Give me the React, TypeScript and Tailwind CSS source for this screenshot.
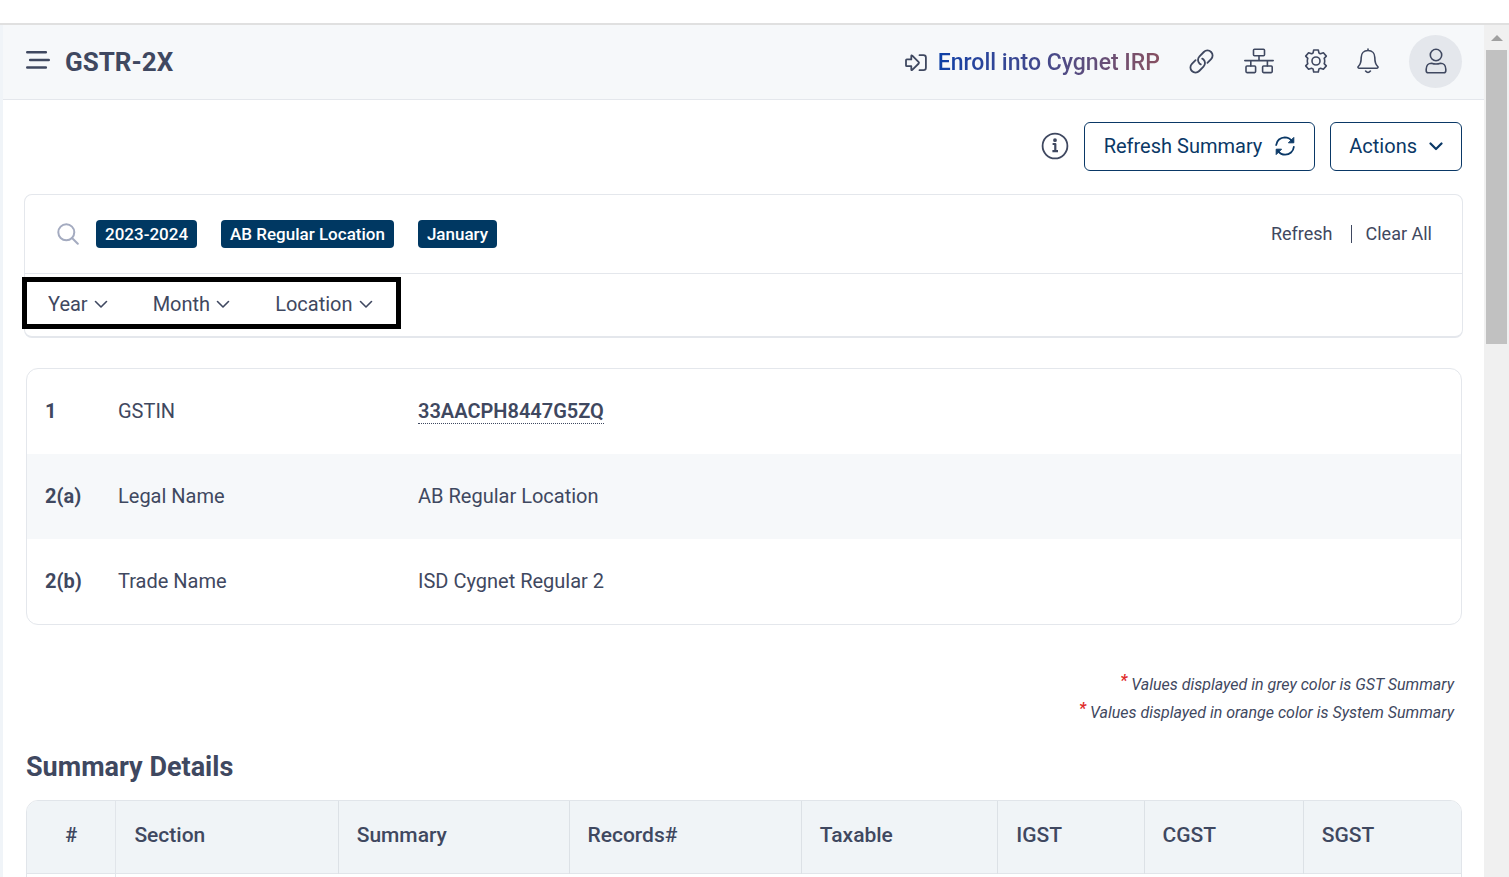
import type { ReactNode } from "react";

const chips = ["2023-2024", "AB Regular Location", "January"];

const filters = [
  { id: "year", label: "Year" },
  { id: "month", label: "Month" },
  { id: "location", label: "Location" },
];

const details = [
  { no: "1", label: "GSTIN", value: "33AACPH8447G5ZQ", link: true },
  { no: "2(a)", label: "Legal Name", value: "AB Regular Location" },
  { no: "2(b)", label: "Trade Name", value: "ISD Cygnet Regular 2" },
];

const columns = [
  { title: "Section", width: "w-[15.5%]" },
  { title: "Summary", width: "w-[16.1%]" },
  { title: "Records#", width: "w-[16.2%]" },
  { title: "Taxable", width: "w-[13.7%]" },
  { title: "IGST", width: "w-[10.2%]" },
  { title: "CGST", width: "w-[11.1%]" },
  { title: "SGST", width: "" },
];

const notes = [
  "Values displayed in grey color is GST Summary",
  "Values displayed in orange color is System Summary",
];

type IconProps = {
  className?: string;
  box: string;
  stroke?: number;
  children: ReactNode;
};

function Icon({ className, box, stroke = 1.6, children }: IconProps) {
  return (
    <svg
      className={className}
      viewBox={box}
      fill="none"
      stroke="currentColor"
      strokeWidth={stroke}
      strokeLinecap="round"
      strokeLinejoin="round"
      aria-hidden="true"
    >
      {children}
    </svg>
  );
}

function Chevron({ stroke = 1.6 }: { stroke?: number }) {
  return (
    <Icon box="0 0 14 14" stroke={stroke} className="w-[14px] h-[14px] shrink-0">
      <path d="M1.5 4.5 7 10l5.500-5.500" />
    </Icon>
  );
}

function Header() {
  return (
    <header className="flex items-center h-[75px] pl-[23px] pr-[22px] bg-[#f6f8fa] border-b border-[#e4e7ec]">
      <button type="button" aria-label="Toggle menu" className="mr-[15px] pb-1">
        <Icon box="0 0 24 20" stroke={2.6} className="w-6 h-5">
          <path d="M1.300 2.200h18.500M4.200 10h18.500M1.300 17.500h18.500" />
        </Icon>
      </button>
      <h1 className="text-[26px] leading-8 font-bold">GSTR-2X</h1>

      <div className="flex items-center ml-auto pb-0.5">
        <a href="#" className="flex items-center gap-[11px] mr-[29px] pt-1">
          <Icon box="0 0 22 18" stroke={1.8} className="w-[22px] h-[18px]">
            <path d="M1 6.200v5.200q0 .8.800.8h4.500v3.200q0 1.300 1 .5l6.400-6.400q.6-.7 0-1.400L7.300 1.700q-1-.8-1 .5v3.200H1.800Q1 5.400 1 6.200Z" />
            <path d="M14.500 1.200h4q2.400 0 2.400 2.400v10.200q0 2.400-2.400 2.400h-4" />
          </Icon>
          <span className="text-[23px] leading-8 font-medium bg-linear-to-r from-[#0a3fa6] via-[#46498a] to-[#875060] bg-clip-text text-transparent">
            Enroll into Cygnet IRP
          </span>
        </a>
        <button type="button" aria-label="Links" className="mr-[30px]">
          <Icon box="0 0 25 25" stroke={1.8} className="w-[25px] h-[25px]">
            <path d="M6.600 11.100 2.900 14.800a5.100 5.100 0 0 0 0 7.200 5.100 5.100 0 0 0 7.300 0l4.300-4.300a5.100 5.100 0 0 0 0-7.200 5 5 0 0 0-1.300-.9" />
            <path d="m18.400 13.900 3.700-3.700a5.100 5.100 0 0 0 0-7.200 5.100 5.100 0 0 0-7.300 0l-4.300 4.300a5.100 5.100 0 0 0 0 7.200 5 5 0 0 0 1.300.9" />
          </Icon>
        </button>
        <button type="button" aria-label="Organisation" className="mr-[30px]">
          <Icon box="0 0 30 26" className="w-[30px] h-[26px]">
            <rect x="9.500" y="1.200" width="11" height="6.600" rx="1" />
            <rect x="2" y="18" width="9.600" height="6.600" rx="1" />
            <rect x="18.600" y="18" width="9.600" height="6.600" rx="1" />
            <path d="M15 8v4.600M.8 12.600h28.400M6.800 12.600V18M23.400 12.600V18" />
          </Icon>
        </button>
        <button type="button" aria-label="Settings" className="mr-[29px]">
          <Icon box="0 0 24 24" className="w-6 h-6">
            <path d="M9.700 1h4.600l.6 2.900q.9.400 1.600.9l2.900-1 2.900 3.300-2.100 2.300q.5 1.200.5 2.600t-.5 2.600l2.100 2.300-2.900 3.300-2.900-1q-.7.500-1.600.9l-.6 2.900H9.700l-.6-2.900q-.9-.4-1.600-.9l-2.900 1-2.900-3.300 2.100-2.300q-.5-1.200-.5-2.600t.5-2.600L1.700 7.100l2.900-3.300 2.900 1q.7-.5 1.600-.9Z" />
            <circle cx="12" cy="12" r="4" />
          </Icon>
        </button>
        <button type="button" aria-label="Notifications" className="mr-[30px]">
          <Icon box="0 0 22 26" className="w-[22px] h-[26px]">
            <path d="M11 1v1.500M11 2.500c-4.200 0-6.800 3-6.800 7 0 5.500-1.200 7.500-2.900 9-.6.700-.3 1.700.6 1.700h18.200c.9 0 1.200-1 .6-1.700-1.700-1.500-2.900-3.500-2.900-9 0-4-2.600-7-6.800-7ZM8.600 23q2.400 2.900 4.800 0" />
          </Icon>
        </button>
        <button
          type="button"
          aria-label="Profile"
          className="flex items-center justify-center w-[53px] h-[53px] rounded-full bg-[#e4e7ec]"
        >
          <Icon box="0 0 22 26" className="w-[22px] h-[26px]">
            <circle cx="11" cy="7" r="5.700" />
            <path d="M6.500 15.200q4.500 1.600 9 0c3 0 5.300 2.400 5.300 6v1.600q0 2-2 2H3.200q-2 0-2-2v-1.600c0-3.600 2.300-6 5.300-6Z" />
          </Icon>
        </button>
      </div>
    </header>
  );
}

function Toolbar() {
  return (
    <div className="flex items-center justify-end gap-[15px] mt-[22px] text-[#0a3866]">
      <button type="button" aria-label="Information" className="pb-0.5 text-[#3f4860]">
        <Icon box="0 0 28 28" stroke={1.8} className="w-7 h-7">
          <circle cx="14" cy="14" r="12.400" />
          <path d="M11.600 12h2.700v7.200M11.400 19.200h5.600" strokeWidth="2.200" strokeLinecap="butt" />
          <circle cx="14" cy="8.200" r="1" fill="currentColor" />
        </Icon>
      </button>
      <button
        type="button"
        className="flex items-center gap-[13px] h-[49px] px-[19px] pb-0.5 border border-[#0a3866] rounded-md"
      >
        Refresh Summary
        <Icon box="0 0 20 20" stroke={1.8} className="w-5 h-5">
          <path d="M1.200 9C1.600 4.500 5.400 1.500 9.800 1.300c3 0 5.400 1.400 7 3.600M18.800 11c-.4 4.500-4.200 7.500-8.600 7.700-3 0-5.400-1.400-7-3.600" />
          <path d="M18.800 1.800v5h-5ZM1.200 18.200v-5h5Z" fill="currentColor" strokeWidth="1" />
        </Icon>
      </button>
      <button
        type="button"
        aria-haspopup="menu"
        className="flex items-center gap-3 h-[49px] px-[18px] pb-0.5 border border-[#0a3866] rounded-md"
      >
        Actions
        <Chevron stroke={2.2} />
      </button>
    </div>
  );
}

function SearchPanel() {
  return (
    <section className="-ml-0.5 -mr-px mt-[23px] border border-b-2 border-[#e4e7ec] rounded-lg">
      <div className="flex items-center h-[79px] pl-8 pr-[30px] border-b border-[#e4e7ec]">
        <Icon box="0 0 22 22" stroke={2} className="w-[22px] h-[22px] mr-[17px] text-[#a4abc0]">
          <circle cx="9.300" cy="9.300" r="8" />
          <path d="m15 15 5.800 5.800" />
        </Icon>
        <ul className="flex gap-6">
          {chips.map((chip) => (
            <li
              key={chip}
              className="h-7 px-[9px] rounded-sm bg-[#003862] text-white text-[17px] leading-7 font-medium"
            >
              {chip}
            </li>
          ))}
        </ul>
        <div className="flex items-center ml-auto text-[18px]">
          <button type="button">Refresh</button>
          <span className="w-px h-[18px] ml-[18px] mr-[14px] bg-[#3f4860]" />
          <button type="button">Clear All</button>
        </div>
      </div>
      <div className="h-[62px] pt-[3px]">
        <div className="flex items-center gap-[45px] w-fit h-[52px] -ml-[3px] pt-0.5 pl-[21px] pr-[23px] border-[5px] border-black">
          {filters.map((filter) => (
            <label key={filter.id} htmlFor={filter.id} className="flex items-center gap-[6px]">
              <select
                id={filter.id}
                aria-label={filter.label}
                className="appearance-none field-sizing-content bg-transparent"
              >
                <option>{filter.label}</option>
              </select>
              <Chevron />
            </label>
          ))}
        </div>
      </div>
    </section>
  );
}

function TaxpayerDetails() {
  return (
    <div className="mt-[30px] border border-[#e4e7ec] rounded-xl overflow-hidden">
      <table className="w-full table-fixed text-left">
        <tbody>
          {details.map((row) => (
            <tr key={row.no} className="h-[85px] even:bg-[#f6f8fa]">
              <th scope="row" className="w-[73px] pl-[18px] pb-0.5 font-bold">
                {row.no}
              </th>
              <td className="w-[300px] pl-[18px] pb-0.5">{row.label}</td>
              <td className="pl-[18px] pb-0.5">
                {row.link ? (
                  <a href="#" className="font-semibold border-b border-dotted border-[#3f4860]">
                    {row.value}
                  </a>
                ) : (
                  row.value
                )}
              </td>
            </tr>
          ))}
        </tbody>
      </table>
    </div>
  );
}

function SummaryTable() {
  return (
    <div className="mt-[17px] border border-[#e1e5ea] rounded-xl overflow-hidden">
      <table className="w-full table-fixed text-left">
        <thead className="bg-[#f0f4f7]">
          <tr className="h-[72px] border-b border-[#e1e5ea]">
            <th scope="col" className="w-[6.2%] pb-1 text-center font-semibold border-r border-[#e1e5ea]">
              #
            </th>
            {columns.map((column) => (
              <th
                key={column.title}
                scope="col"
                className={`${column.width} pl-[18px] pb-1 text-[21px] font-medium border-r border-[#dce1e6] last:border-r-0`}
              >
                {column.title}
              </th>
            ))}
          </tr>
        </thead>
        <tbody>
          <tr className="h-[72px]">
            <td className="border-r border-[#e1e5ea]" />
            <td colSpan={7} />
          </tr>
        </tbody>
      </table>
    </div>
  );
}

function Scrollbar() {
  return (
    <div className="flex flex-col items-center w-[25px] shrink-0 bg-[#f0f0f0]" aria-hidden="true">
      <svg viewBox="0 0 12 6" className="w-3 h-[6px] mt-[10px] mb-[9px] shrink-0 fill-[#a0a0a0]">
        <path d="M6 0 12 6H0Z" />
      </svg>
      <div className="w-[21px] h-[34.5%] bg-[#c1c1c1]" />
    </div>
  );
}

export default function App() {
  return (
    <div className="flex flex-col h-screen overflow-hidden bg-white text-[#3f4860] font-[Roboto,sans-serif] text-[20px] leading-7">
      <div className="h-[23px] shrink-0" />
      <div className="flex flex-1 min-h-0 border-t-2 border-[#e0e0e0]">
        <div className="w-[3px] shrink-0 bg-[#f0f4f8]" />
        <div className="flex-1 min-w-0 overflow-hidden">
          <Header />
          <main className="pl-[23px] pr-[22px]">
            <Toolbar />
            <SearchPanel />
            <TaxpayerDetails />
            <div className="mt-[46px] pr-2 text-right text-[16px] leading-7 italic">
              {notes.map((note) => (
                <p key={note}>
                  <span className="align-[4px] leading-none text-[#e02b2b] font-bold">*</span> {note}
                </p>
              ))}
            </div>
            <h2 className="mt-6 text-[27px] leading-8 font-bold">Summary Details</h2>
            <SummaryTable />
          </main>
        </div>
        <Scrollbar />
      </div>
    </div>
  );
}
